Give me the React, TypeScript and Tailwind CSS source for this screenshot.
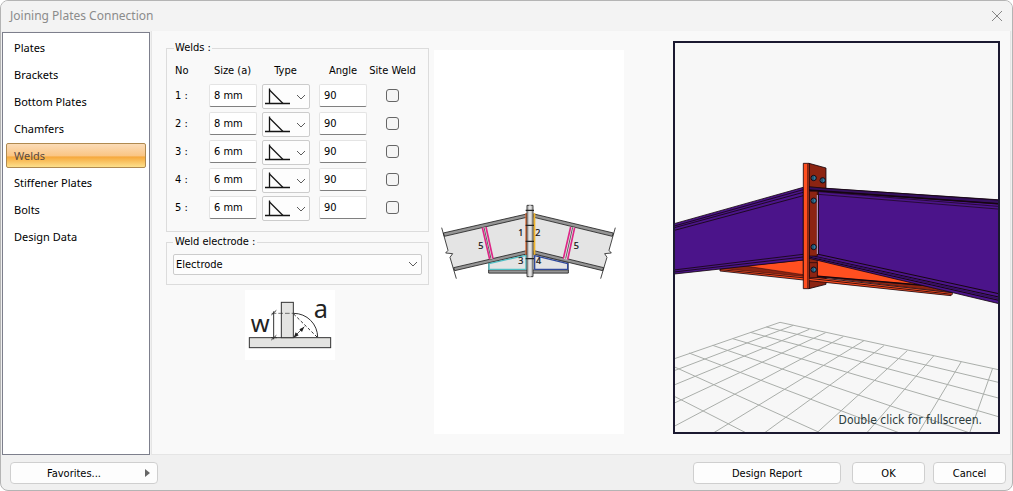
import { useState } from 'react';

const pages = ['Plates', 'Brackets', 'Bottom Plates', 'Chamfers', 'Welds', 'Stiffener Plates', 'Bolts', 'Design Data'];

const initialWelds = [
    { no: 1, size: '8 mm', angle: '90' },
    { no: 2, size: '8 mm', angle: '90' },
    { no: 3, size: '6 mm', angle: '90' },
    { no: 4, size: '6 mm', angle: '90' },
    { no: 5, size: '6 mm', angle: '90' },
];

// floor grid of the 3D view, one line per entry: x1, y1, x2, y2
const gridLines = [
    [345, 37, 1000, 179],
    [304, 51, 1000, 217],
    [256, 67, 1000, 264],
    [203, 86, 1000, 320],
    [143, 106, 915, 369],
    [72, 129, 704, 369],
    [20, 167, 467, 369],
    [20, 255, 244, 369],
    [345, 37, 20, 149],
    [385, 46, 20, 185],
    [433, 58, 20, 228],
    [482, 68, 20, 283],
    [535, 80, 20, 353],
    [597, 92, 145, 369],
    [657, 107, 298, 369],
    [727, 122, 455, 369],
    [806, 138, 605, 369],
    [889, 155, 760, 369],
    [983, 175, 914, 369],
];

const bolts = [
    [446, 84],
    [473, 91],
    [446, 152],
    [446, 291],
    [446, 359],
];

const inputClass = 'block h-[23px] w-12 rounded-[2px] border border-[#e4e4e4] border-b-[#808080] bg-white pl-1 outline-none';
const buttonClass = 'h-[22px] rounded-[4px] border border-[#cfcfcf] bg-[#fdfdfd] pt-[2px] text-center hover:bg-white';

function Chevron({ className }: { className: string }) {
    return (
        <svg viewBox="0 0 10 10" className={className} fill="none" stroke="#5c5c5c" strokeWidth="1">
            <path d="M1 3 L5 7 L9 3" />
        </svg>
    );
}

function WeldType({ no }: { no: number }) {
    return (
        <div className="relative h-[25px] w-12">
            <select
                aria-label={`Type ${no}`}
                className="h-full w-full appearance-none rounded-[2px] border border-[#cccccc] bg-[#fdfdfd] outline-none"
            >
                <option value="fillet" aria-label="Fillet" />
            </select>
            <svg viewBox="0 0 26 17" className="pointer-events-none absolute left-[2px] top-1 h-[17px] w-[26px]" fill="none" stroke="#151515">
                <path d="M5.5 0.5 V16" strokeWidth="1.3" />
                <path d="M5.5 2 L19 15.5" strokeWidth="1.3" />
                <path d="M1 15.5 H26" strokeWidth="1.3" />
            </svg>
            <Chevron className="pointer-events-none absolute right-1 top-2 h-[10px] w-[10px]" />
        </div>
    );
}

function ThroatDiagram() {
    return (
        <svg viewBox="0 0 270 210" className="h-[70px] w-[90px] bg-white font-['Noto_Sans',sans-serif]" fill="none" stroke="#333">
            <rect x="13" y="143" width="244" height="30" fill="#e4e4e2" strokeWidth="3" />
            <rect x="109" y="37" width="36" height="106" fill="#e4e4e2" strokeWidth="3" />
            <path d="M146 70 A72 72 0 0 1 218 142" strokeWidth="3" />
            <path d="M146 72 L216 141" strokeWidth="3" strokeDasharray="9 6" />
            <path d="M148 140 L178 110" strokeWidth="2.5" />
            <path d="M146 143 L152 127 L161 136 Z M178 110 L163 118 L171 126 Z" fill="#222" stroke="none" />
            <path d="M86 64 V148" strokeWidth="3" />
            <path d="M80 70 H145" strokeWidth="2" strokeDasharray="14 6" />
            <path d="M78 143 H96 M79 75 L94 61 M79 150 L94 136" strokeWidth="3" />
            <text x="17" y="126" fontSize="72" fill="#222" stroke="none">w</text>
            <text x="206" y="83" fontSize="76" fill="#222" stroke="none">a</text>
        </svg>
    );
}

function ConnectionDiagram() {
    return (
        <svg viewBox="0 0 190 384" className="h-full w-full font-['Noto_Sans',sans-serif]" fill="none" stroke="#222" strokeLinejoin="round">
            <g transform="translate(-4 140) scale(0.3333)">
                {/* haunch */}
                <path d="M176 218 L288 192 H312 L415 218 V249 H176 Z" fill="#e4e4e4" strokeWidth="2" />
                <path d="M176 240 H415 V249 H176 Z" fill="#959595" strokeWidth="2" />

                {/* left and right rafters */}
                <path d="M40 129 L290 72 V192 L71 242 L60 203 L67 190 L49 188 L54 181 Z" fill="#e4e4e4" stroke="none" />
                <path d="M550 129 L312 72 V192 L520 242 L529 203 L524 190 L544 188 L537 181 Z" fill="#e4e4e4" stroke="none" />
                <path d="M40 129 L290 72 V82 L43 139 Z M71 233 L290 182 V192 L74 242 Z" fill="#959595" strokeWidth="2.5" />
                <path d="M550 129 L312 72 V82 L547 139 Z M521 233 L312 182 V192 L518 242 Z" fill="#959595" strokeWidth="2.5" />
                <path d="M35 113 L54 181 L47 189 L68 191 L60 202 L79 266" strokeWidth="2.5" />
                <path d="M556 113 L537 181 L544 189 L524 191 L531 202 L512 266" strokeWidth="2.5" />

                {/* haunch welds */}
                <path d="M177 238 V221 L288 196 V238 Z" stroke="#4fbfc4" strokeWidth="4" />
                <path d="M314 197 L413 221 V238 H314 Z" stroke="#30499c" strokeWidth="4" />

                {/* stiffeners */}
                <path d="M157 113 L168 111 L189 206 L179 208 Z M422 111 L434 113 L413 209 L400 206 Z" fill="#e4e4e4" stroke="none" />
                <path d="M162 112 L183 206 M428 112 L407 206" strokeWidth="2" />
                <path d="M157 113 L179 208 M168 111 L189 206 M422 111 L400 206 M434 113 L413 209" stroke="#dd2687" strokeWidth="5" />

                {/* end plates and bolts */}
                <path d="M289 70 V194" stroke="#d86a35" strokeWidth="6" />
                <path d="M313 70 V194" stroke="#f0b52c" strokeWidth="6" />
                <rect x="291" y="46" width="18" height="214" fill="#c5c5c5" strokeWidth="2.5" />
                <path d="M300 46 V260" stroke="#efefef" strokeWidth="4" />
                <path d="M287 61 H312 M287 106 H312 M287 154 H312 M287 206 H312" strokeWidth="3.5" />
                <g fontSize="27" fill="#111" stroke="#111" strokeWidth="0.7">
                    <text x="265" y="137">1</text>
                    <text x="316" y="137">2</text>
                    <text x="265" y="223">3</text>
                    <text x="318" y="223">4</text>
                    <text x="145" y="176">5</text>
                    <text x="431" y="176">5</text>
                </g>
            </g>
        </svg>
    );
}

function Scene() {
    return (
        <svg viewBox="0 0 323 389" preserveAspectRatio="xMidYMid slice" className="absolute inset-0 h-full w-full" fill="none">
            <g transform="translate(-10 267) scale(0.3333)" stroke="#aaaeaa" strokeWidth="3">
                {gridLines.map(([x1, y1, x2, y2]) => (
                    <line key={`${x1}-${y1}-${x2}-${y2}`} x1={x1} y1={y1} x2={x2} y2={y2} />
                ))}
            </g>

            <g transform="translate(-10 107) scale(0.3333)" stroke="#16060f" strokeWidth="2.5">
                {/* rear part of the end plate */}
                <path d="M432 40 L483 54 V403 L432 416 Z" fill="#8c2412" />

                {/* haunch */}
                <path d="M165 355 L415 330 V378 L862 428 V433 L858 437 L432 392 L415 390 L165 363 Z" fill="#ff4f20" />
                <path d="M165 355 L240 348 L415 374 V379 Z M457 380 L760 402 L862 428 Z" fill="#8c2412" strokeWidth="1.5" />
                <path d="M457 320 L800 395 V408 L457 379 Z" fill="#ff4f20" strokeWidth="2" />
                <path d="M165 359 L432 385 L860 433" strokeWidth="2.5" />
                <path d="M432 376 L800 408" strokeWidth="4" />

                {/* left rafter */}
                <path d="M10 226 L415 112 V330 L10 374 Z" fill="#4b148a" />
                <path d="M10 233 L415 119 M10 238 L415 127 M10 246 L415 137" strokeWidth="2.5" />
                <path d="M10 362 L415 313 M10 368 L415 321" strokeWidth="2.5" />

                {/* right rafter */}
                <path d="M460 114 L1010 150 V463 L432 325 V318 L460 313 Z" fill="#4b148a" />
                <path d="M432 110 L470 114 L1010 151 V162 L432 121 Z" fill="#35105f" />
                <path d="M432 120 L1010 162" strokeWidth="5" />
                <path d="M460 125 L1010 170 M460 133 L1010 178 M460 133 V313" strokeWidth="2" />
                <path d="M460 313 L1010 433 M440 317 L1010 443 M432 321 L1010 453" strokeWidth="3" />
                <path d="M440 319 L1010 448" stroke="#35105f" strokeWidth="4" />

                {/* web side of the end plate */}
                <path d="M433 124 H457 V318 H433 Z M433 338 H457 V383 H433 Z" fill="#8c2412" strokeWidth="2" />
                <path d="M457 135 V312" stroke="#cbb1dc" strokeWidth="3" />
                <path d="M415 40 H432 V416 H415 Z" fill="#ff4f20" />
                <path d="M428 40 V416" stroke="#7a1f10" strokeWidth="3" />
                {bolts.map(([x, y]) => (
                    <g key={`${x}-${y}`}>
                        <circle cx={x} cy={y} r="8" fill="#2f7ea3" strokeWidth="3" />
                        <path d={`M${x - 2} ${y - 7} v14`} strokeWidth="2" />
                    </g>
                ))}
            </g>
        </svg>
    );
}

export default function App() {
    const [page, setPage] = useState('Welds');
    const [welds, setWelds] = useState(initialWelds);

    const updateWeld = (no: number, field: 'size' | 'angle', value: string) => {
        setWelds(welds.map(weld => (weld.no === no ? { ...weld, [field]: value } : weld)));
    };

    return (
        <div className="flex min-h-screen flex-col overflow-hidden rounded-lg border border-[#b4b4b4] bg-[#f0f0f0] font-['DejaVu_Sans_Condensed','Noto_Sans',sans-serif] text-[11px] leading-4 text-black">
            {/* Title bar */}
            <header className="flex h-[30px] items-center justify-between bg-[#f3f3f3] pl-[9px] pr-[9px]">
                <h1 className="font-['Noto_Sans',sans-serif] text-xs text-[#8b8b8b]">Joining Plates Connection</h1>
                <button aria-label="Close">
                    <svg viewBox="0 0 12 12" className="h-3 w-3" stroke="#858585" strokeWidth="1">
                        <path d="M1 1 L11 11 M11 1 L1 11" />
                    </svg>
                </button>
            </header>

            <div className="flex flex-1">
                {/* Page list */}
                <nav className="ml-px mt-px flex w-[148px] shrink-0 flex-col gap-[2px] border border-[#7d7f8c] bg-white px-[3px] pt-[2px] font-['Noto_Sans',sans-serif]">
                    {pages.map(name => (
                        <button
                            key={name}
                            onClick={() => setPage(name)}
                            className={`h-[25px] shrink-0 rounded-[2px] border pl-[7px] text-left ${
                                page === name
                                    ? 'border-[#b08a50] bg-[linear-gradient(#fbdcb8_0%,#fac583_52%,#f6a83c_56%,#fde08c_100%)] text-[#5a4a42]'
                                    : 'border-transparent'
                            }`}
                        >
                            {name}
                        </button>
                    ))}
                </nav>

                <main className="ml-px mr-px flex flex-1 border border-t-0 border-[#e5e5e5] bg-[#f9f9f9] pb-5 pl-[14px] pr-[10px] pt-[9px]">
                    <div className="w-[263px] shrink-0">
                        <fieldset className="h-[192px] border border-[#dcdcdc] px-[7px]">
                            <legend className="px-px">Welds :</legend>
                            <table className="mt-[7px] w-[244px] table-fixed border-collapse">
                                <thead>
                                    <tr className="h-[21px] align-top">
                                        <th className="w-[35px] pl-px text-left font-normal">No</th>
                                        <th className="w-[53px] pr-[6px] font-normal">Size (a)</th>
                                        <th className="w-[57px] pr-[10px] font-normal">Type</th>
                                        <th className="w-12 font-normal">Angle</th>
                                        <th className="whitespace-nowrap font-normal">Site Weld</th>
                                    </tr>
                                </thead>
                                <tbody>
                                    {welds.map(weld => (
                                        <tr key={weld.no} className="h-7 align-top">
                                            <td className="pl-px pt-1">{weld.no} :</td>
                                            <td>
                                                <input
                                                    aria-label={`Size ${weld.no}`}
                                                    value={weld.size}
                                                    onChange={e => updateWeld(weld.no, 'size', e.target.value)}
                                                    className={inputClass}
                                                />
                                            </td>
                                            <td>
                                                <WeldType no={weld.no} />
                                            </td>
                                            <td>
                                                <input
                                                    aria-label={`Angle ${weld.no}`}
                                                    value={weld.angle}
                                                    onChange={e => updateWeld(weld.no, 'angle', e.target.value)}
                                                    className={inputClass}
                                                />
                                            </td>
                                            <td className="pt-[5px]">
                                                <input
                                                    type="checkbox"
                                                    aria-label={`Site weld ${weld.no}`}
                                                    className="mx-auto block h-[13px] w-[13px] appearance-none rounded-[3px] border border-[#666666] bg-[#f5f5f5] checked:bg-[#005fb8]"
                                                />
                                            </td>
                                        </tr>
                                    ))}
                                </tbody>
                            </table>
                        </fieldset>

                        <fieldset className="mt-[2px] h-[51px] border border-[#dcdcdc] px-[6px]">
                            <legend className="px-[2px]">
                                <label htmlFor="electrode">Weld electrode :</label>
                            </legend>
                            <div className="relative mt-1">
                                <select
                                    id="electrode"
                                    className="block h-[21px] w-full appearance-none rounded-[2px] border border-[#cccccc] bg-[#fdfdfd] pl-[2px] pt-px outline-none"
                                >
                                    <option>Electrode</option>
                                </select>
                                <Chevron className="pointer-events-none absolute right-1 top-[5px] h-[10px] w-[10px]" />
                            </div>
                        </fieldset>

                        <div className="mt-[5px] flex justify-center pr-[15px]">
                            <ThroatDiagram />
                        </div>
                    </div>

                    <div className="ml-[5px] mr-[49px] mt-[10px] w-[190px] shrink-0 bg-white">
                        <ConnectionDiagram />
                    </div>

                    {/* 3D view */}
                    <div className="relative mt-px min-w-[200px] flex-1 overflow-hidden border-2 border-[#1b1930] bg-[#f7f7f7]">
                        <Scene />
                        <p className="absolute bottom-1 right-4 text-xs text-[#2c3c3c]">Double click for fullscreen.</p>
                    </div>
                </main>
            </div>

            <footer className="flex h-[35px] items-start justify-between pl-[9px] pr-[6px] pt-[7px]">
                <button className={`${buttonClass} relative w-[148px] pr-5`}>
                    Favorites...
                    <svg viewBox="0 0 5 8" className="absolute right-[7px] top-[6px] h-2 w-[5px]" fill="#666">
                        <path d="M0 0 L5 4 L0 8 Z" />
                    </svg>
                </button>
                <div className="flex gap-[11px]">
                    <button className={`${buttonClass} w-[148px]`}>Design Report</button>
                    <div className="flex gap-2">
                        <button className={`${buttonClass} w-[73px]`}>OK</button>
                        <button className={`${buttonClass} w-[73px]`}>Cancel</button>
                    </div>
                </div>
            </footer>
        </div>
    );
}
